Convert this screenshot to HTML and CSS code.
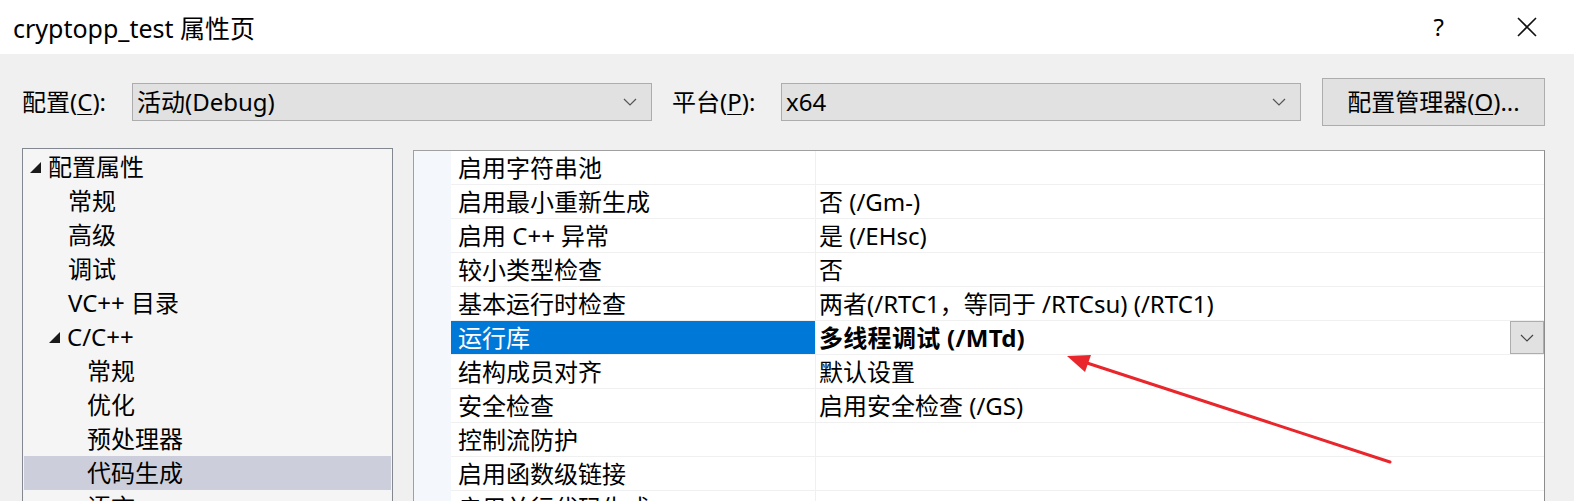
FILE: index.html
```html
<!DOCTYPE html>
<html lang="zh-CN">
<head>
<meta charset="utf-8">
<title>cryptopp_test 属性页</title>
<link rel="stylesheet" href="styles.css">
</head>
<body>
<div class="window">
  <header class="titlebar">
    <div class="title">cryptopp_test 属性页</div>
    <div class="title-buttons">
      <span class="help">?</span>
      <svg class="close" width="20" height="20" viewBox="0 0 20 20"><path d="M1 1 L19 19 M19 1 L1 19" stroke="#111" stroke-width="1.6" fill="none"/></svg>
    </div>
  </header>

  <div class="config-row">
    <label class="lbl lbl-config">配置(<u>C</u>):</label>
    <div class="combo"><span>活动(Debug)</span><svg class="chev" width="14" height="8" viewBox="0 0 14 8"><path d="M1 1 L7 7 L13 1" stroke="#555" stroke-width="1.2" fill="none"/></svg></div>
    <label class="lbl lbl-platform">平台(<u>P</u>):</label>
    <div class="combo"><span>x64</span><svg class="chev" width="14" height="8" viewBox="0 0 14 8"><path d="M1 1 L7 7 L13 1" stroke="#555" stroke-width="1.2" fill="none"/></svg></div>
    <button class="btn">配置管理器(<u>O</u>)...</button>
  </div>

  <div class="main">
    <div class="tree">
      <div class="node l0"><svg class="tri" width="11" height="11" viewBox="0 0 11 11"><polygon points="11,0 11,11 0,11" fill="#1a1a1a"/></svg>配置属性</div>
      <div class="node l1">常规</div>
      <div class="node l1">高级</div>
      <div class="node l1">调试</div>
      <div class="node l1">VC++ 目录</div>
      <div class="node l1t"><svg class="tri" width="11" height="11" viewBox="0 0 11 11"><polygon points="11,0 11,11 0,11" fill="#1a1a1a"/></svg>C/C++</div>
      <div class="node l2">常规</div>
      <div class="node l2">优化</div>
      <div class="node l2">预处理器</div>
      <div class="node l2 selected">代码生成</div>
      <div class="node l2">语言</div>
    </div>

    <div class="grid">
      <div class="row"><div class="gutter"></div><div class="name">启用字符串池</div><div class="value"></div></div>
      <div class="row"><div class="gutter"></div><div class="name">启用最小重新生成</div><div class="value">否 (/Gm-)</div></div>
      <div class="row"><div class="gutter"></div><div class="name">启用 C++ 异常</div><div class="value">是 (/EHsc)</div></div>
      <div class="row"><div class="gutter"></div><div class="name">较小类型检查</div><div class="value">否</div></div>
      <div class="row"><div class="gutter"></div><div class="name">基本运行时检查</div><div class="value">两者(/RTC1，等同于 /RTCsu) (/RTC1)</div></div>
      <div class="row active"><div class="gutter"></div><div class="name">运行库</div><div class="value"><b>多线程调试 (/MTd)</b><span class="dd"><svg width="14" height="8" viewBox="0 0 14 8"><path d="M1 1 L7 7 L13 1" stroke="#444" stroke-width="1.2" fill="none"/></svg></span></div></div>
      <div class="row"><div class="gutter"></div><div class="name">结构成员对齐</div><div class="value">默认设置</div></div>
      <div class="row"><div class="gutter"></div><div class="name">安全检查</div><div class="value">启用安全检查 (/GS)</div></div>
      <div class="row"><div class="gutter"></div><div class="name">控制流防护</div><div class="value"></div></div>
      <div class="row"><div class="gutter"></div><div class="name">启用函数级链接</div><div class="value"></div></div>
      <div class="row"><div class="gutter"></div><div class="name">启用并行代码生成</div><div class="value"></div></div>
    </div>
  </div>

  <svg class="annot" width="1574" height="501" viewBox="0 0 1574 501">
    <line x1="1390" y1="462" x2="1084" y2="362" stroke="#e8262c" stroke-width="3" stroke-linecap="round"/>
    <polygon points="1067,356 1091,355 1085,372" fill="#e8262c"/>
  </svg>
</div>
</body>
</html>
```

FILE: styles.css
```css
* { box-sizing: border-box; }
html, body { margin: 0; padding: 0; }
body {
  width: 1574px;
  height: 501px;
  overflow: hidden;
  background: #f0f0f0;
  font-family: "Noto Sans", "Noto Sans CJK SC", sans-serif;
  font-size: 24px;
  color: #000;
}
.window { position: relative; width: 1574px; height: 501px; overflow: hidden; }

.titlebar {
  height: 54px;
  background: #fff;
  display: flex;
  align-items: center;
  justify-content: space-between;
  padding: 0 37px 0 13px;
}
.title { font-size: 25px; line-height: 1; padding-top: 2px; }
.title-buttons { display: flex; align-items: center; gap: 73px; }
.help { font-size: 24px; line-height: 1; }
.close { display: block; }

.config-row {
  display: flex;
  align-items: center;
  height: 70px;
  padding: 26px 0 0 22px;
}
.lbl { line-height: 1; }
.lbl u, .btn u { text-decoration-thickness: 1px; text-underline-offset: 3px; }
.lbl-config { width: 110px; }
.lbl-platform { width: 109px; margin-left: 20px; }
.combo {
  width: 520px;
  height: 38px;
  background: #e1e1e1;
  border: 1px solid #adadad;
  display: flex;
  align-items: center;
  justify-content: space-between;
  padding: 0 14px 0 4px;
  line-height: 1;
}
.chev { display: block; }
.btn {
  margin-left: 21px;
  width: 223px;
  height: 48px;
  background: #e1e1e1;
  border: 1px solid #adadad;
  font: inherit;
  color: #000;
  padding: 0;
  line-height: 1;
}

.main {
  display: flex;
  align-items: flex-start;
  padding: 24px 0 0 22px;
}
.tree {
  width: 371px;
  height: 400px;
  background: #f5f5f5;
  border: 1px solid #828790;
  padding: 1px 1px 0 1px;
}
.node {
  height: 34px;
  display: flex;
  align-items: center;
  white-space: nowrap;
  line-height: 1;
}
.node .tri { margin-right: 7px; flex: none; }
.l0 { padding-left: 6px; }
.l1 { padding-left: 44px; }
.l1t { padding-left: 25px; }
.l2 { padding-left: 63px; }
.selected { background: #cccedb; }

.grid {
  margin-left: 20px;
  margin-top: 2px;
  width: 1132px;
  height: 400px;
  background: #fff;
  border: 1px solid #a0a0a0;
  border-right-color: #8c8c8c;
}
.row {
  display: flex;
  height: 34px;
  border-bottom: 1px solid #f0f0f0;
}
.gutter {
  width: 37px;
  flex: none;
  background: #f4f7fc;
  margin-bottom: -1px;
}
.name {
  width: 365px;
  flex: none;
  padding-left: 7px;
  border-right: 1px solid #f0f0f0;
  display: flex;
  align-items: center;
  white-space: nowrap;
  line-height: 1;
}
.value {
  flex: 1;
  display: flex;
  align-items: center;
  padding-left: 3px;
  white-space: nowrap;
  line-height: 1;
  position: relative;
}
.active .name { background: #0078d7; color: #fff; }
.value b { font-weight: 700; letter-spacing: 0.3px; }
.dd {
  position: absolute;
  right: 0;
  top: 0;
  width: 34px;
  height: 33px;
  background: #e1e1e1;
  border: 1px solid #adadad;
  display: flex;
  align-items: center;
  justify-content: center;
}
.dd svg { display: block; }

.annot { position: absolute; left: 0; top: 0; pointer-events: none; }
```
